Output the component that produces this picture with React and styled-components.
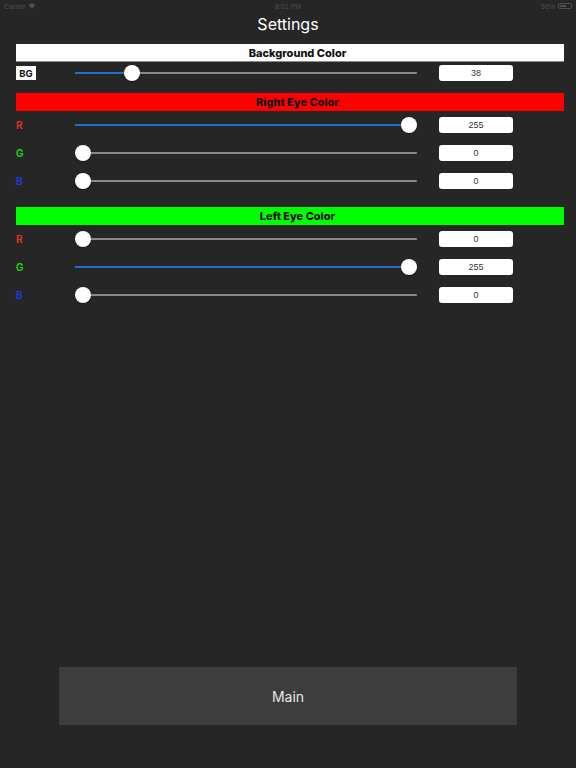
import React from "react";
import styled, { createGlobalStyle } from "styled-components";

const GlobalStyle = createGlobalStyle`
  html, body {
    margin: 0;
    padding: 0;
    background: #262626;
  }
  body {
    font-family: Inter, "Liberation Sans", sans-serif;
  }
`;

const Page = styled.div`
  height: 768px;
  display: flex;
  flex-direction: column;
  background: #262626;
  color: white;
`;

const StatusBar = styled.div`
  height: 12px;
  padding: 0 4px;
  display: flex;
  align-items: center;
  justify-content: space-between;
  font-size: 7px;
  color: #4f4f4f;
  font-family: "Liberation Sans", sans-serif;
`;

const StatusSide = styled.div`
  flex: 1;
  display: flex;
  align-items: center;
  gap: 3px;
  justify-content: ${(p) => (p.$right ? "flex-end" : "flex-start")};
`;

const Battery = styled.span`
  width: 14px;
  height: 6px;
  border: 1px solid #4f4f4f;
  border-radius: 2px;
  box-sizing: border-box;
  padding: 1px;
  display: inline-flex;
  span {
    width: 56%;
    background: #4f4f4f;
  }
`;

const Title = styled.div`
  height: 24px;
  display: flex;
  align-items: center;
  justify-content: center;
  font-size: 16px;
  color: #fff;
  margin-bottom: 8px;
`;

const Content = styled.div`
  padding: 0 12px 0 16px;
  display: flex;
  flex-direction: column;
`;

const Header = styled.div`
  height: ${(p) => p.$h || 18}px;
  background: ${(p) => p.$bg};
  display: flex;
  align-items: center;
  justify-content: center;
  padding-left: 15px;
  font-size: 11px;
  font-weight: 800;
  color: #111;
  box-sizing: border-box;
  border-bottom: ${(p) => (p.$line ? "1px solid #8a8a8a" : "none")};
`;

const Row = styled.div`
  height: ${(p) => p.$h || 28}px;
  display: flex;
  align-items: center;
`;

const Label = styled.div`
  width: 59px;
  font-size: 10px;
  font-weight: 600;
  color: ${(p) => p.$color};
`;

const BgTag = styled.span`
  display: inline-flex;
  align-items: center;
  justify-content: center;
  width: 20px;
  height: 14px;
  background: #fff;
  color: #111;
  font-size: 9.5px;
  font-weight: 700;
`;

const SliderWrap = styled.div`
  position: relative;
  width: 342px;
  height: 16px;
  margin-right: 22px;
`;

const Track = styled.div`
  position: absolute;
  left: 0;
  right: 0;
  top: 7px;
  height: 2px;
  border-radius: 1px;
  background: #8a8a8a;
`;

const Fill = styled.div`
  position: absolute;
  left: 0;
  top: 7px;
  height: 2px;
  border-radius: 1px;
  background: #1e6fd4;
`;

const Thumb = styled.div`
  position: absolute;
  top: 0;
  width: 16px;
  height: 16px;
  border-radius: 50%;
  background: #fff;
  box-shadow: 0 1px 2px rgba(0, 0, 0, 0.35);
`;

const ValueBox = styled.div`
  width: 74px;
  height: 16px;
  border-radius: 3px;
  background: #fff;
  display: flex;
  align-items: center;
  justify-content: center;
  font-size: 9px;
  color: #333;
  font-family: "Liberation Sans", sans-serif;
`;

const Spacer = styled.div`
  height: ${(p) => p.$h}px;
`;

const MainButton = styled.button`
  margin: auto 59px 43px 59px;
  height: 58px;
  border: none;
  background: #3d3d3d;
  color: #e6e6e6;
  font-family: Inter, "Liberation Sans", sans-serif;
  font-size: 14px;
`;

const Slider = ({ value }) => {
  const pos = (value / 255) * (342 - 16);
  return (
    <SliderWrap>
      <Track />
      {value > 0 && <Fill style={{ width: pos + 8 }} />}
      <Thumb style={{ left: pos }} />
    </SliderWrap>
  );
};

const ColorRow = ({ label, color, value }) => (
  <Row>
    <Label $color={color}>{label}</Label>
    <Slider value={value} />
    <ValueBox>{value}</ValueBox>
  </Row>
);

const channels = [
  { label: "R", color: "#f0321e" },
  { label: "G", color: "#13e013" },
  { label: "B", color: "#1e3cf0" },
];

const App = () => {
  const right = [255, 0, 0];
  const left = [0, 255, 0];
  return (
    <Page>
      <GlobalStyle />
      <StatusBar>
        <StatusSide>
          Carrier
          <svg width="8" height="6" viewBox="0 0 8 6">
            <path d="M0.5 2 A5 5 0 0 1 7.5 2 L4 6 Z" fill="#4f4f4f" />
          </svg>
        </StatusSide>
        <span>8:01 PM</span>
        <StatusSide $right>
          56%
          <Battery>
            <span />
          </Battery>
        </StatusSide>
      </StatusBar>
      <Title>Settings</Title>
      <Content>
        <Header $bg="#fff" $h={18} $line>
          Background Color
        </Header>
        <Row $h={22}>
          <Label>
            <BgTag>BG</BgTag>
          </Label>
          <Slider value={38} />
          <ValueBox>38</ValueBox>
        </Row>
        <Spacer $h={9} />
        <Header $bg="#ff0000">Right Eye Color</Header>
        {channels.map((c, i) => (
          <ColorRow key={c.label} {...c} value={right[i]} />
        ))}
        <Spacer $h={12} />
        <Header $bg="#00ff00">Left Eye Color</Header>
        {channels.map((c, i) => (
          <ColorRow key={c.label} {...c} value={left[i]} />
        ))}
      </Content>
      <MainButton>Main</MainButton>
    </Page>
  );
};

export default App;
